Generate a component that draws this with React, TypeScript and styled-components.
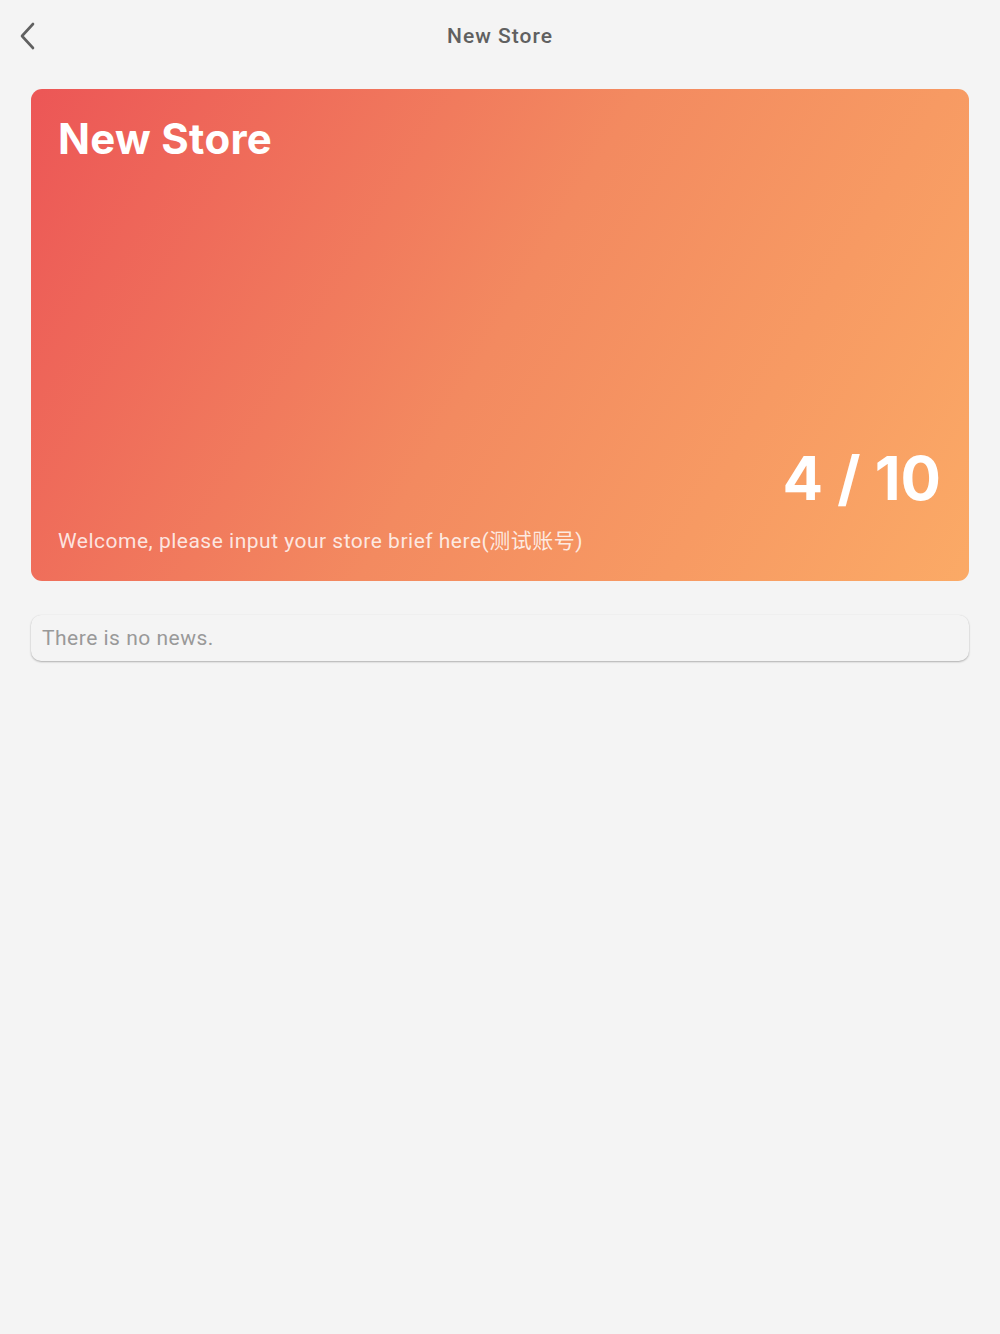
import styled, { createGlobalStyle } from "styled-components";

const Global = createGlobalStyle`
  html, body {
    margin: 0;
    padding: 0;
    background: #f4f4f4;
    font-family: Roboto, "Noto Sans CJK SC", sans-serif;
  }
`;

const Page = styled.div`
  min-height: 1334px;
  background: #f4f4f4;
  display: flex;
  flex-direction: column;
`;

const NavBar = styled.div`
  height: 72px;
  display: flex;
  align-items: center;
  justify-content: center;
  position: relative;
`;

const BackButton = styled.button`
  position: absolute;
  left: 12px;
  top: 20px;
  width: 32px;
  height: 32px;
  padding: 0;
  border: 0;
  background: none;
  display: flex;
  align-items: center;
  justify-content: center;
`;

const NavTitle = styled.div`
  font-size: 21px;
  font-weight: 500;
  color: #606060;
  letter-spacing: 1px;
`;

const Content = styled.div`
  padding: 17px 31px 0 31px;
  display: flex;
  flex-direction: column;
  gap: 34px;
`;

const Card = styled.div`
  height: 492px;
  border-radius: 11px;
  background: linear-gradient(120deg, #ec5656 0%, #f38a60 50%, #fbaa66 100%);
  padding: 24px 28px 26px 27px;
  box-sizing: border-box;
  display: flex;
  flex-direction: column;
  color: #fff;
`;

const StoreName = styled.div`
  font-family: Inter, Roboto, sans-serif;
  font-size: 42px;
  font-weight: 700;
  line-height: 52px;
  letter-spacing: 0.3px;
`;

const Spacer = styled.div`
  flex: 1;
`;

const Count = styled.div`
  align-self: flex-end;
  font-family: Inter, Roboto, sans-serif;
  font-size: 60px;
  font-weight: 700;
  line-height: 70px;
  margin-bottom: 14px;
`;

const Brief = styled.div`
  font-size: 21px;
  line-height: 28px;
  letter-spacing: 0.5px;
  color: rgba(255, 255, 255, 0.82);
`;

const NewsBox = styled.div`
  height: 46px;
  border-radius: 10px;
  background: #f4f4f4;
  box-shadow: 0 1px 2px rgba(0, 0, 0, 0.28), 0 0 1px rgba(0, 0, 0, 0.08);
  padding: 0 11px;
  display: flex;
  align-items: center;
  font-size: 21px;
  letter-spacing: 0.5px;
  color: #999;
`;

export default function App() {
  return (
    <Page>
      <Global />
      <NavBar>
        <BackButton aria-label="back">
          <svg width="20" height="28" viewBox="0 0 20 28" fill="none">
            <path
              d="M15 2 L4 14 L15 26"
              stroke="#606060"
              strokeWidth="2.6"
              strokeLinecap="round"
              strokeLinejoin="round"
            />
          </svg>
        </BackButton>
        <NavTitle>New Store</NavTitle>
      </NavBar>
      <Content>
        <Card>
          <StoreName>New Store</StoreName>
          <Spacer />
          <Count>4 / 10</Count>
          <Brief>Welcome, please input your store brief here(测试账号)</Brief>
        </Card>
        <NewsBox>There is no news.</NewsBox>
      </Content>
    </Page>
  );
}
